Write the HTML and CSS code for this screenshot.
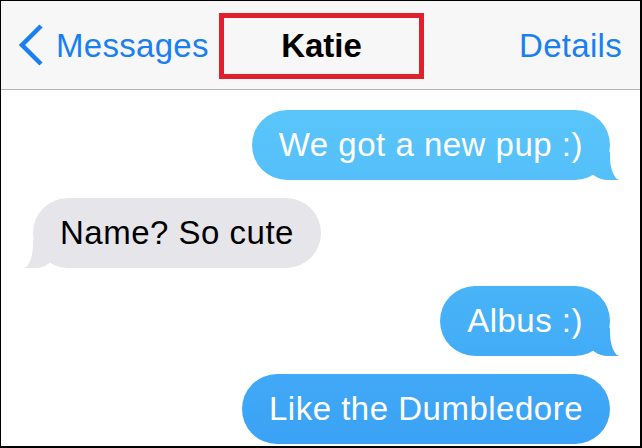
FILE: index.html
```html
<!DOCTYPE html>
<html>
<head>
<meta charset="utf-8">
<link rel="stylesheet" href="styles.css">
</head>
<body>
<div class="screen">
  <header class="navbar">
    <a class="nav-back">
      <svg class="chevron" width="28" height="44" viewBox="0 0 28 44"><polyline points="24,3 5,22 24,41" fill="none" stroke="#1a7ff2" stroke-width="4.5" stroke-linecap="butt" stroke-linejoin="miter"/></svg>
      <span>Messages</span>
    </a>
    <div class="nav-title"><span>Katie</span></div>
    <a class="nav-details">Details</a>
  </header>
  <main class="thread">
    <div class="bubble sent tail">We got a new pup :)</div>
    <div class="bubble received tail">Name? So cute</div>
    <div class="bubble sent tail">Albus :)</div>
    <div class="bubble sent">Like the Dumbledore</div>
  </main>
</div>
</body>
</html>
```
FILE: styles.css
```css
* { box-sizing: border-box; }
html, body { margin: 0; padding: 0; background: #fff; }
.screen {
  width: 642px;
  height: 448px;
  border-style: solid;
  border-color: #000;
  border-width: 1px 2px 2px 1px;
  overflow: hidden;
  font-family: "Liberation Sans", Arial, sans-serif;
  background: #fff;
  display: flex;
  flex-direction: column;
}
.navbar {
  height: 89px;
  flex: none;
  background: #f7f7f8;
  border-bottom: 1px solid #b4b4b4;
  display: grid;
  grid-template-columns: 1fr auto 1fr;
  align-items: center;
  padding: 0 18px 0 16px;
}
.nav-back {
  display: flex;
  align-items: center;
  gap: 11px;
  color: #1a7ff2;
  font-size: 33px;
  letter-spacing: 0.3px;
  margin-top: 2px;
}
.chevron { display: block; margin-top: -2px; }
.nav-title {
  justify-self: center;
  border: 5px solid #e0202b;
  width: 205px;
  height: 66px;
  display: flex;
  align-items: center;
  justify-content: center;
  font-weight: bold;
  font-size: 33px;
  color: #000;
  margin-left: 4px;
  margin-top: 2px;
}
.nav-details {
  justify-self: end;
  color: #1a7ff2;
  font-size: 33px;
  letter-spacing: 0.3px;
  margin-top: 2px;
}
.thread {
  flex: 1;
  display: flex;
  flex-direction: column;
  gap: 18px;
  padding: 20px 30px 0 32px;
}
.bubble {
  position: relative;
  font-size: 33px;
  line-height: 38px;
  letter-spacing: 0.5px;
  padding: 16px 27px;
  border-radius: 35px;
  height: 70px;
  white-space: nowrap;
}
.sent {
  align-self: flex-end;
  color: #fff;
  background: linear-gradient(to bottom, #5fcdfb 0px, #58c3fa 140px, #48b2f8 300px, #3aa1f5 448px) fixed;
}
.received {
  align-self: flex-start;
  color: #000;
  background: #e5e5ea;
}
.tail::before, .tail::after {
  content: "";
  position: absolute;
  bottom: 0;
}
.sent.tail::before {
  right: -10px;
  width: 32px;
  height: 28px;
  background: inherit;
  border-bottom-left-radius: 20px 16px;
}
.sent.tail::after {
  right: -36px;
  width: 36px;
  height: 30px;
  background: #fff;
  border-bottom-left-radius: 10px 24px;
}
.received.tail::before {
  left: -10px;
  width: 32px;
  height: 28px;
  background: #e5e5ea;
  border-bottom-right-radius: 20px 16px;
}
.received.tail::after {
  left: -36px;
  width: 36px;
  height: 30px;
  background: #fff;
  border-bottom-right-radius: 10px 24px;
}
```
